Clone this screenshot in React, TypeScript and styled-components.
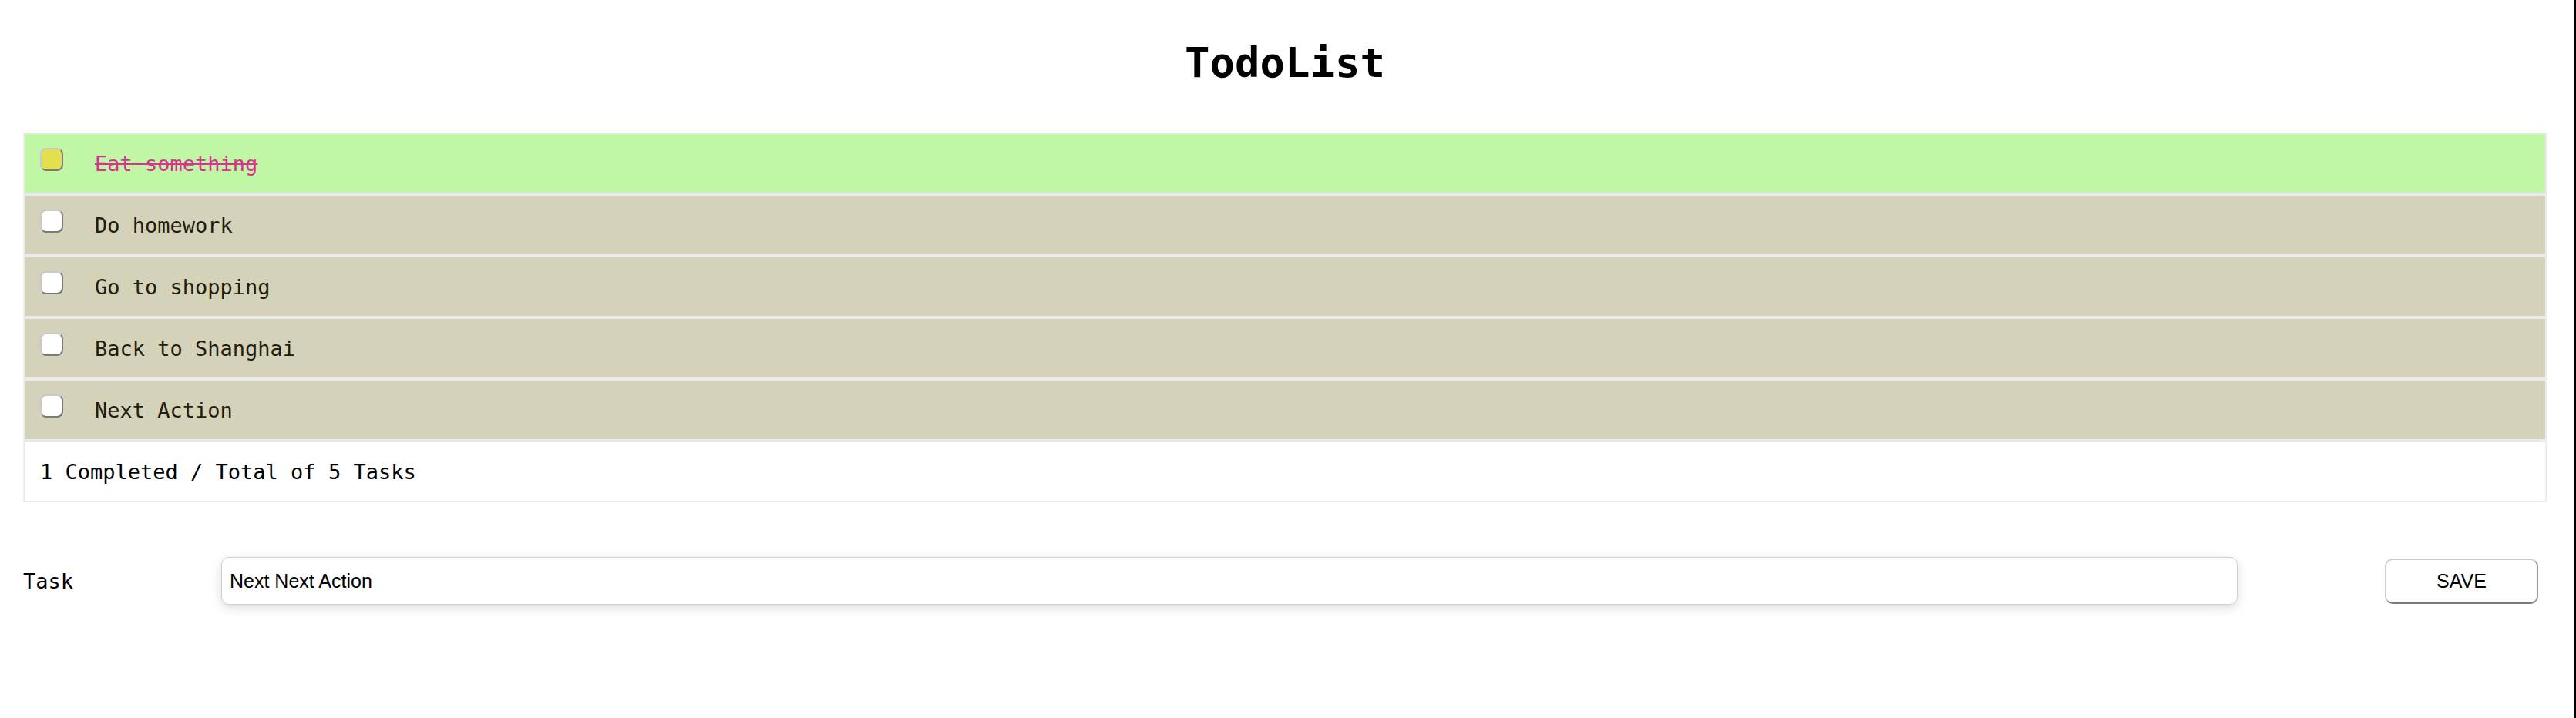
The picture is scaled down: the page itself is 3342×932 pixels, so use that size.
import React, { useEffect, useRef, useState } from "react";
import styled, { createGlobalStyle } from "styled-components";

const GlobalStyle = createGlobalStyle`
  html, body {
    margin: 0;
    padding: 0;
    background: #ffffff;
  }
  * { box-sizing: border-box; }
`;

const Page = styled.div`
  width: 3342px;
  height: 932px;
  padding: 50px 36px 0 30px;
  border-right: 2px solid #000;
  background: #fff;
  font-family: "DejaVu Sans Mono", "Liberation Mono", monospace;
`;

const Title = styled.h1`
  margin: 0 0 59px;
  text-align: center;
  font-size: 54px;
  font-weight: bold;
  line-height: 63px;
  color: #000;
`;

const List = styled.ul`
  list-style: none;
  margin: 0;
  padding: 0;
`;

const Row = styled.li<{ $done?: boolean; $footer?: boolean }>`
  display: flex;
  align-items: center;
  height: 80px;
  padding: 0 20px;
  border: 2px solid #ebebeb;
  background: ${(p) => (p.$footer ? "#ffffff" : p.$done ? "#c1f6a7" : "#d4d2b9")};
  font-size: 27px;
  line-height: 31px;
  color: ${(p) => (p.$footer ? "#000" : "#231c0c")};
`;

const Check = styled.input`
  appearance: none;
  -webkit-appearance: none;
  margin: 0 41px 10px 0;
  width: 30px;
  height: 30px;
  flex: none;
  border-radius: 8px;
  border: 2px solid #c9c9c9;
  border-right-color: #7a7a7a;
  border-bottom-color: #7a7a7a;
  background: #ffffff;
  cursor: pointer;

  &:checked {
    background: #e2e051;
  }
  &:focus {
    outline: none;
  }
`;

const Label = styled.span<{ $done?: boolean }>`
  color: ${(p) => (p.$done ? "#d7338f" : "inherit")};
  text-decoration: ${(p) => (p.$done ? "line-through" : "none")};
`;

const Form = styled.form`
  display: flex;
  align-items: center;
  margin-top: 71px;
  padding-right: 11px;
`;

const FieldLabel = styled.label`
  flex: none;
  width: 257px;
  font-size: 27px;
  color: #000;
`;

const TaskInput = styled.input`
  flex: 1;
  min-width: 0;
  height: 62px;
  padding: 0 10px;
  border: 1px solid #cfcfcf;
  border-radius: 10px;
  box-shadow: 0 4px 14px rgba(0, 0, 0, 0.14);
  font-family: "Liberation Sans", Arial, sans-serif;
  font-size: 25px;
  color: #000;
  background: #fff;
  outline: none;
  caret-color: #000;

  &:focus {
    outline: none;
    border-color: #cfcfcf;
  }
`;

const SaveButton = styled.button`
  flex: none;
  margin-left: 191px;
  height: 59px;
  width: 199px;
  border: 2px solid #cccccc;
  border-bottom-color: #7a7a7a;
  border-right-color: #9a9a9a;
  border-radius: 10px;
  background: #fff;
  font-family: "Liberation Sans", Arial, sans-serif;
  font-size: 25px;
  color: #000;
  cursor: pointer;
`;

type Todo = { id: number; text: string; done: boolean };

export default function App() {
  const [todos, setTodos] = useState<Todo[]>([
    { id: 1, text: "Eat something", done: true },
    { id: 2, text: "Do homework", done: false },
    { id: 3, text: "Go to shopping", done: false },
    { id: 4, text: "Back to Shanghai", done: false },
    { id: 5, text: "Next Action", done: false },
  ]);
  const [task, setTask] = useState("Next Next Action");
  const inputRef = useRef<HTMLInputElement>(null);

  useEffect(() => {
    const el = inputRef.current;
    if (el) {
      el.focus();
      el.setSelectionRange(el.value.length, el.value.length);
    }
  }, []);

  const toggle = (id: number) =>
    setTodos((ts) => ts.map((t) => (t.id === id ? { ...t, done: !t.done } : t)));

  const completed = todos.filter((t) => t.done).length;

  const onSubmit = (e: React.FormEvent) => {
    e.preventDefault();
    if (!task.trim()) return;
    setTodos((ts) => [...ts, { id: Date.now(), text: task.trim(), done: false }]);
    setTask("");
  };

  return (
    <Page>
      <GlobalStyle />
      <Title>TodoList</Title>
      <List>
        {todos.map((t) => (
          <Row key={t.id} $done={t.done}>
            <Check type="checkbox" checked={t.done} onChange={() => toggle(t.id)} />
            <Label $done={t.done}>{t.text}</Label>
          </Row>
        ))}
        <Row $footer>
          {completed} Completed / Total of {todos.length} Tasks
        </Row>
      </List>
      <Form onSubmit={onSubmit}>
        <FieldLabel htmlFor="task">Task</FieldLabel>
        <TaskInput
          id="task"
          ref={inputRef}
          value={task}
          onChange={(e) => setTask(e.target.value)}
        />
        <SaveButton type="submit">SAVE</SaveButton>
      </Form>
    </Page>
  );
}
